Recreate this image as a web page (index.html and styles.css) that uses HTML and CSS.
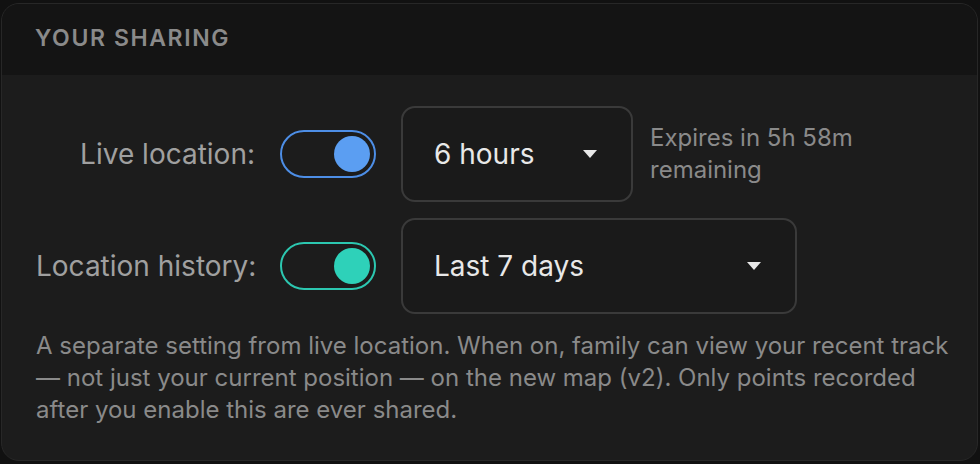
FILE: index.html
```html
<!DOCTYPE html>
<html lang="en">
<head>
<meta charset="utf-8">
<title>Your sharing</title>
<link rel="stylesheet" href="styles.css">
</head>
<body>
<section class="panel">
  <header class="panel-head">
    <h2 class="panel-title">YOUR SHARING</h2>
  </header>
  <div class="panel-body">
    <div class="row">
      <span class="label">Live location:</span>
      <span class="toggle toggle-blue"><span class="knob"></span></span>
      <span class="select select-short">
        <span class="select-text">6 hours</span>
        <span class="caret"></span>
      </span>
      <span class="note">Expires in 5h 58m<br>remaining</span>
    </div>
    <div class="row">
      <span class="label">Location history:</span>
      <span class="toggle toggle-teal"><span class="knob"></span></span>
      <span class="select select-long">
        <span class="select-text">Last 7 days</span>
        <span class="caret"></span>
      </span>
    </div>
    <p class="desc">A separate setting from live location. When on, family can view your recent track — not just your current position — on the new map (v2). Only points recorded after you enable this are ever shared.</p>
  </div>
</section>
</body>
</html>
```
FILE: styles.css
```css
html, body {
  margin: 0;
  padding: 0;
  background: #111111;
}
body {
  padding: 3px 2px 3px 1px;
  font-family: Inter, "Noto Sans", "Liberation Sans", sans-serif;
}
.panel {
  height: 456px;
  border: 1px solid #272727;
  border-radius: 18px;
  background: #1c1c1c;
  overflow: hidden;
  display: flex;
  flex-direction: column;
}
.panel-head {
  box-sizing: border-box;
  height: 71px;
  background: #141414;
  display: flex;
  align-items: center;
  padding: 0 0 4px 33px;
  flex: none;
}
.panel-title {
  margin: 0;
  font-size: 23px;
  font-weight: 600;
  letter-spacing: 0.07em;
  color: #8a8a8a;
}
.panel-body {
  padding: 31px 0 0 34px;
  display: flex;
  flex-direction: column;
  gap: 16px;
}
.row {
  display: flex;
  align-items: center;
  height: 96px;
}
.label {
  width: 219px;
  text-align: right;
  font-size: 28px;
  color: #a0a0a0;
  margin-right: 25px;
  flex: none;
  white-space: nowrap;
}
.toggle {
  box-sizing: border-box;
  width: 96px;
  height: 48px;
  border-radius: 24px;
  border: 2px solid;
  padding: 4px;
  display: flex;
  justify-content: flex-end;
  align-items: center;
  margin-right: 25px;
  flex: none;
}
.toggle-blue { border-color: #4d8ee6; }
.toggle-teal { border-color: #2cc7b0; }
.knob {
  width: 36px;
  height: 36px;
  border-radius: 50%;
}
.toggle-blue .knob { background: #5b9ef2; }
.toggle-teal .knob { background: #2ed1b9; }
.select {
  box-sizing: border-box;
  height: 96px;
  border: 2px solid #3a3a3a;
  border-radius: 14px;
  background: #1a1a1a;
  display: flex;
  align-items: center;
  justify-content: space-between;
  padding: 0 34px 0 31px;
  flex: none;
}
.select-short { width: 232px; }
.select-long { width: 396px; }
.select-text {
  font-size: 28px;
  color: #e8e8e8;
}
.caret {
  width: 0;
  height: 0;
  border-left: 7px solid transparent;
  border-right: 7px solid transparent;
  border-top: 8px solid #e8e8e8;
}
.note {
  margin-left: 17px;
  font-size: 24px;
  line-height: 32px;
  color: #8a8a8a;
}
.desc {
  margin: 0;
  width: 915px;
  font-size: 24px;
  line-height: 32px;
  color: #8a8a8a;
}
```
